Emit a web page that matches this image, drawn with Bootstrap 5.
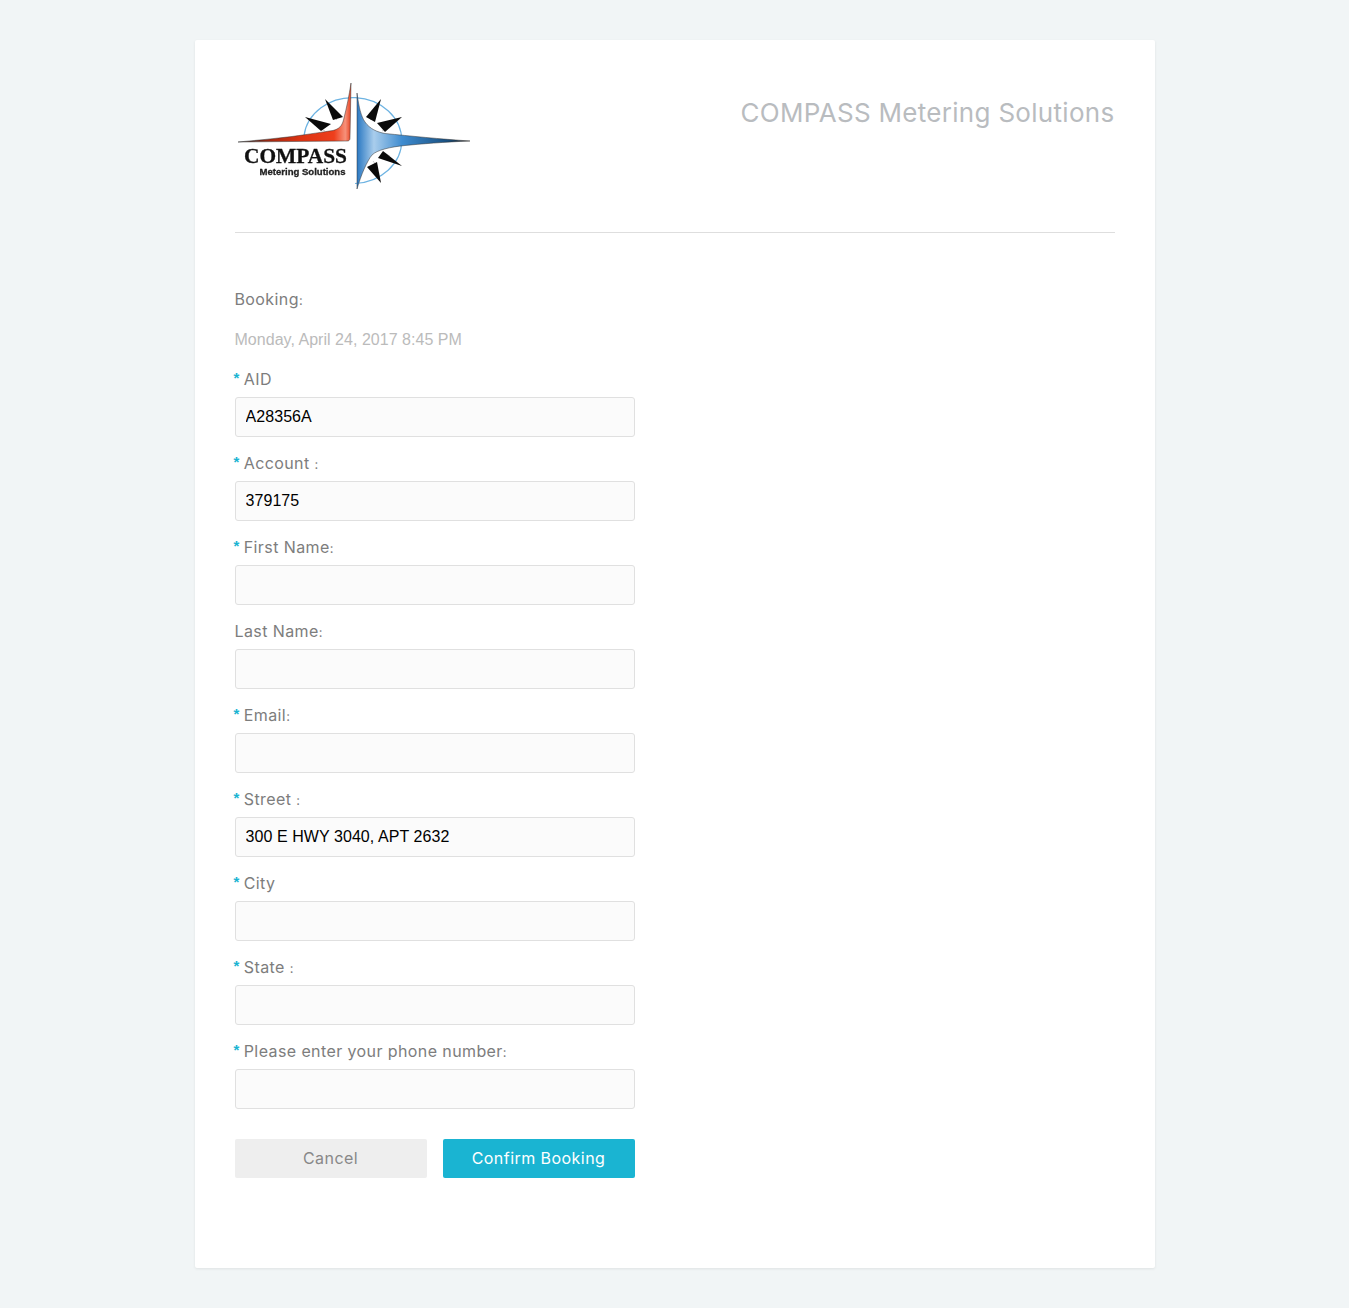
<!DOCTYPE html>
<html lang="en">
<head>
    <meta charset="UTF-8">
    <meta name="viewport" content="width=device-width, initial-scale=1.0">
    <title>COMPASS Metering Solutions</title>
    <link rel="stylesheet" href="https://cdn.jsdelivr.net/npm/bootstrap@5.3.0/dist/css/bootstrap.min.css">
    <style>
        body {
            background: #f1f5f6;
            font-family: "Inter", "Open Sans", sans-serif;
            color: #7d7d7d;
        }
        .sheet {
            width: 960px;
            margin: 40px auto;
            padding: 40px 40px 90px;
            background: #fff;
            border-radius: 2px;
            box-shadow: 0 1px 3px rgba(0, 0, 0, .08);
        }
        .sheet-head {
            height: 153px;
            border-bottom: 1px solid #dedede;
            margin-bottom: 54px;
        }
        .sheet-title {
            font-size: 26px;
            font-weight: 400;
            line-height: 32px;
            color: #b9bcbf;
            margin: 17px 0 0;
            letter-spacing: .3px;
        }
        .logo-mark { display: block; filter: blur(.3px); }
        .logo-big { font-family: "Liberation Serif", serif; font-weight: 700; font-size: 21px; stroke: #111; stroke-width: .3px; }
        .logo-small { font-family: "Liberation Sans", sans-serif; font-weight: 700; font-size: 9.6px; stroke: #222; stroke-width: .3px; }
        .booking-form { width: 400px; }
        .field-label {
            display: block;
            height: 24px;
            font-size: 16px;
            line-height: 24px;
            margin-bottom: 6px;
            letter-spacing: .4px;
        }
        .req {
            color: #1ab4d2;
            font-size: 15px;
            font-weight: 700;
            line-height: 1;
            position: relative;
            top: -2px;
            left: -1px;
            margin-right: 3px;
            font-family: "Liberation Sans", sans-serif;
        }
        .colon { font-size: 13px; }
        .date-line {
            font-family: "Liberation Sans", sans-serif;
            font-size: 16px;
            line-height: 24px;
            color: #bbb;
            margin: 17px 0 15px;
            letter-spacing: .03px;
        }
        .field { margin-bottom: 14px; }
        .field .form-control {
            height: 40px;
            padding: 0 10px;
            font-family: "Liberation Sans", sans-serif;
            font-size: 16px;
            letter-spacing: .07px;
            color: #000;
            background: #fbfbfb;
            border: 1px solid #e0e0e0;
            border-radius: 3px;
        }
        .form-actions { margin-top: 30px; }
        .form-actions .btn {
            width: 192px;
            height: 39px;
            border: 0;
            border-radius: 2px;
            font-size: 16px;
            line-height: 39px;
            letter-spacing: .45px;
            padding: 0;
        }
        .btn-cancel { background: #eee; color: #888; }
        .btn-confirm { background: #1ab4d2; color: #fff; }
    </style>
</head>
<body>
    <div class="sheet">
        <div class="sheet-head d-flex justify-content-between align-items-start">
            <svg class="logo-mark" width="240" height="115" viewBox="10 10 240 115" role="img" aria-label="COMPASS Metering Solutions logo">
                <defs>
                    <linearGradient id="redFill" x1="0" y1="0" x2="1" y2="0">
                        <stop offset="0" stop-color="#222"/>
                        <stop offset=".3" stop-color="#a82810"/>
                        <stop offset=".55" stop-color="#dc3312"/>
                        <stop offset=".85" stop-color="#ee3f1c"/>
                        <stop offset=".95" stop-color="#f6917a"/>
                        <stop offset="1" stop-color="#e8401f"/>
                    </linearGradient>
                    <linearGradient id="blueFill" x1="0" y1="0" x2="1" y2="0">
                        <stop offset="0" stop-color="#2a78c2"/>
                        <stop offset=".15" stop-color="#a9cdec"/>
                        <stop offset=".4" stop-color="#3f8cd0"/>
                        <stop offset=".8" stop-color="#174f80"/>
                        <stop offset="1" stop-color="#222"/>
                    </linearGradient>
                </defs>
                <path d="M79 66A49 43 0 1 1 130 113.5" fill="none" stroke="#6db3e2" stroke-width="1.2"/>
                <g stroke="#bbb" stroke-width=".8">
                    <path d="M107 45l5 5M94 58l6 3M163 58l-6 3M150 45l-5 5M172 66h-6M152 96l-4-5M165 86l-6-3"/>
                </g>
                <g fill="#0a0a0a">
                    <path d="M100 29L118 47 108 50Z"/>
                    <path d="M80 47L106 54 96 61Z"/>
                    <path d="M156 29L141 47 150 52Z"/>
                    <path d="M177 47L152 53 160 62Z"/>
                    <path d="M177 96L158 81 153 88Z"/>
                    <path d="M156 113L142 97 152 92Z"/>
                </g>
                <path d="M126 13C124 26 122 36 118.5 50 117 56 114 59 108 60.5 98 62 85 64 67 66.5 50 68.5 30 70.5 13 72L122 71C125 71 125 69 125 67Z" fill="url(#redFill)" stroke="#333" stroke-width=".5"/>
                <path d="M132 23C134 38 136 46 140 52 145 59 152 62 160 63.5 185 66 215 69 245 71 220 72 195 74 180 75.5 165 77 152 80 147 85 142 91 136 105 132 119Z" fill="url(#blueFill)" stroke="#333" stroke-width=".5"/>
                <text class="logo-big" x="19" y="93" textLength="103" lengthAdjust="spacingAndGlyphs" fill="#111">COMPASS</text>
                <text class="logo-small" x="34.5" y="105" textLength="86" lengthAdjust="spacingAndGlyphs" fill="#222">Metering Solutions</text>
            </svg>
            <h1 class="sheet-title">COMPASS Metering Solutions</h1>
        </div>

        <form class="booking-form">
            <div class="field-label mb-0">Booking<span class="colon">:</span></div>
            <p class="date-line">Monday, April 24, 2017 8:45 PM</p>

            <div class="field">
                <label class="field-label" for="aid"><span class="req">*</span>AID</label>
                <input class="form-control" id="aid" type="text" value="A28356A">
            </div>
            <div class="field">
                <label class="field-label" for="account"><span class="req">*</span>Account <span class="colon">:</span></label>
                <input class="form-control" id="account" type="text" value="379175">
            </div>
            <div class="field">
                <label class="field-label" for="firstName"><span class="req">*</span>First Name<span class="colon">:</span></label>
                <input class="form-control" id="firstName" type="text">
            </div>
            <div class="field">
                <label class="field-label" for="lastName">Last Name<span class="colon">:</span></label>
                <input class="form-control" id="lastName" type="text">
            </div>
            <div class="field">
                <label class="field-label" for="email"><span class="req">*</span>Email<span class="colon">:</span></label>
                <input class="form-control" id="email" type="text">
            </div>
            <div class="field">
                <label class="field-label" for="street"><span class="req">*</span>Street <span class="colon">:</span></label>
                <input class="form-control" id="street" type="text" value="300 E HWY 3040, APT 2632">
            </div>
            <div class="field">
                <label class="field-label" for="city"><span class="req">*</span>City</label>
                <input class="form-control" id="city" type="text">
            </div>
            <div class="field">
                <label class="field-label" for="state"><span class="req">*</span>State <span class="colon">:</span></label>
                <input class="form-control" id="state" type="text">
            </div>
            <div class="field mb-0">
                <label class="field-label" for="phone"><span class="req">*</span>Please enter your phone number<span class="colon">:</span></label>
                <input class="form-control" id="phone" type="text">
            </div>

            <div class="form-actions d-flex gap-3">
                <button type="button" class="btn btn-cancel">Cancel</button>
                <button type="button" class="btn btn-confirm">Confirm Booking</button>
            </div>
        </form>
    </div>

    <script src="https://cdn.jsdelivr.net/npm/bootstrap@5.3.0/dist/js/bootstrap.bundle.min.js"></script>
</body>
</html>
